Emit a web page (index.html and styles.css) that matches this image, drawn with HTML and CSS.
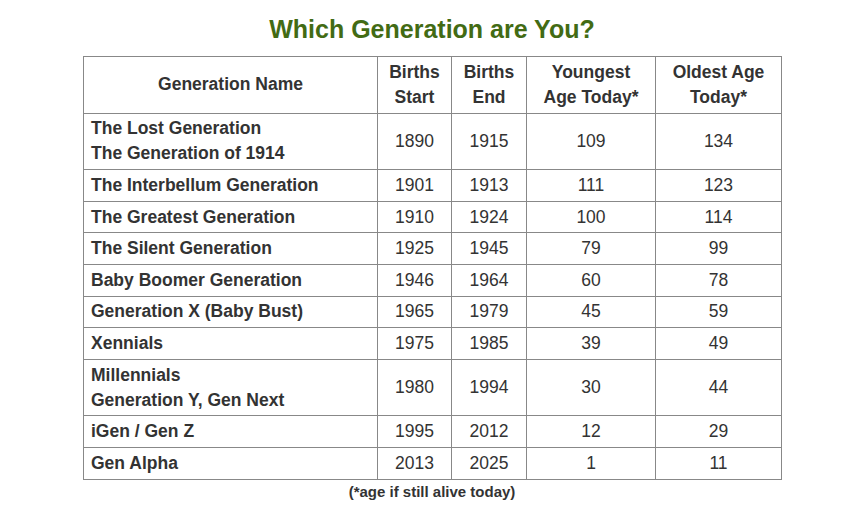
FILE: index.html
```html
<!DOCTYPE html>
<html lang="en">
<head>
<meta charset="utf-8">
<title>Which Generation are You?</title>
<link rel="stylesheet" href="styles.css">
</head>
<body>
<div class="wrap">
  <h2 class="title">Which Generation are You?</h2>
  <table class="gen">
    <colgroup>
      <col class="c1"><col class="c2"><col class="c3"><col class="c4"><col class="c5">
    </colgroup>
    <thead>
      <tr>
        <th>Generation Name</th>
        <th>Births<br>Start</th>
        <th>Births<br>End</th>
        <th>Youngest<br>Age Today*</th>
        <th>Oldest Age<br>Today*</th>
      </tr>
    </thead>
    <tbody>
      <tr><td class="name">The Lost Generation<br>The Generation of 1914</td><td>1890</td><td>1915</td><td>109</td><td>134</td></tr>
      <tr><td class="name">The Interbellum Generation</td><td>1901</td><td>1913</td><td>111</td><td>123</td></tr>
      <tr><td class="name">The Greatest Generation</td><td>1910</td><td>1924</td><td>100</td><td>114</td></tr>
      <tr><td class="name">The Silent Generation</td><td>1925</td><td>1945</td><td>79</td><td>99</td></tr>
      <tr><td class="name">Baby Boomer Generation</td><td>1946</td><td>1964</td><td>60</td><td>78</td></tr>
      <tr><td class="name">Generation X (Baby Bust)</td><td>1965</td><td>1979</td><td>45</td><td>59</td></tr>
      <tr><td class="name">Xennials</td><td>1975</td><td>1985</td><td>39</td><td>49</td></tr>
      <tr><td class="name">Millennials<br>Generation Y, Gen Next</td><td>1980</td><td>1994</td><td>30</td><td>44</td></tr>
      <tr><td class="name">iGen / Gen Z</td><td>1995</td><td>2012</td><td>12</td><td>29</td></tr>
      <tr><td class="name">Gen Alpha</td><td>2013</td><td>2025</td><td>1</td><td>11</td></tr>
    </tbody>
  </table>
  <p class="note">(*age if still alive today)</p>
</div>
</body>
</html>
```

FILE: styles.css
```css
html, body {
  margin: 0;
  padding: 0;
  background: #ffffff;
}
body {
  padding-left: 18px;
  font-family: "Liberation Sans", Arial, sans-serif;
  color: #333333;
}
.wrap {
  width: 698px;
  margin: 0 auto;
  padding-top: 14px;
}
.title {
  margin: 0 0 12px 0;
  font-size: 25px;
  line-height: 30px;
  font-weight: bold;
  text-align: center;
  color: #426b14;
}
.gen {
  width: 698px;
  border-collapse: collapse;
  table-layout: fixed;
  font-size: 17.5px;
  line-height: 25px;
}
.c1 { width: 294px; }
.c2 { width: 74px; }
.c3 { width: 75px; }
.c4 { width: 129px; }
.c5 { width: 126px; }
.gen th,
.gen td {
  border: 1px solid #888888;
  padding: 2.8px 7px;
  text-align: center;
  vertical-align: middle;
}
.gen th {
  font-weight: bold;
}
.gen td {
  font-weight: normal;
}
.gen td.name {
  text-align: left;
  font-weight: bold;
}
.note {
  margin: 2px 0 0 0;
  font-size: 15px;
  line-height: 20px;
  font-weight: bold;
  text-align: center;
}
```
